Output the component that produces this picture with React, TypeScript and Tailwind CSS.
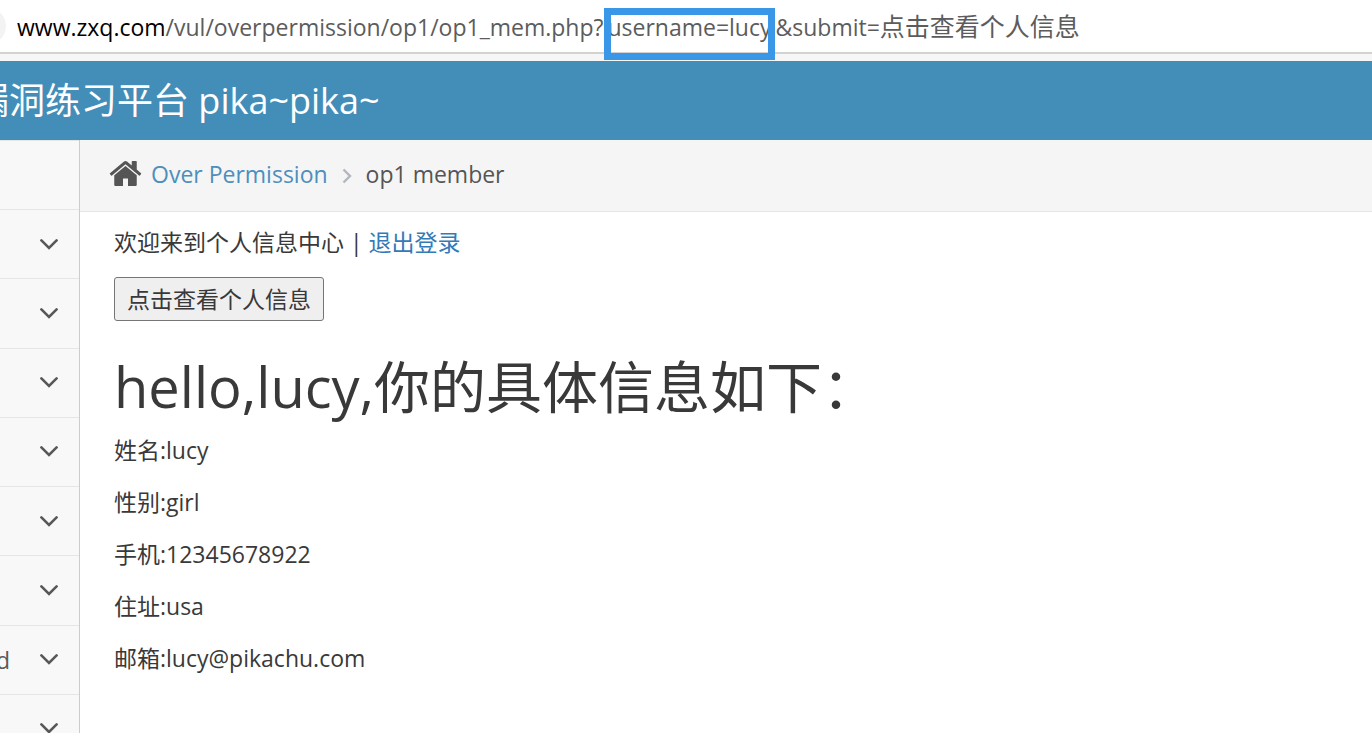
import type { ReactNode } from "react"

interface MenuItem {
    id: number
    label?: string
}

interface ProfileField {
    name: string
    value: string
}

const menuItems: MenuItem[] = [
    { id: 1 },
    { id: 2 },
    { id: 3 },
    { id: 4 },
    { id: 5 },
    { id: 6 },
    { id: 7, label: "d" },
    { id: 8 },
]

const profile: ProfileField[] = [
    { name: "姓名", value: "lucy" },
    { name: "性别", value: "girl" },
    { name: "手机", value: "12345678922" },
    { name: "住址", value: "usa" },
    { name: "邮箱", value: "lucy@pikachu.com" },
]

/* ---------------- Icons ---------------- */
function HomeIcon() {
    return (
        <svg viewBox="0 0 1792 1792" className="size-[35px] shrink-0 fill-[#555]" aria-hidden="true">
            <path d="M1472 992v480q0 26-19 45t-45 19h-384v-384h-256v384h-384q-26 0-45-19t-19-45v-480q0-1 .5-3t.5-3l575-474 575 474q1 2 1 6zm223-69l-62 74q-8 9-21 11h-3q-13 0-21-7l-692-577-692 577q-12 8-24 7-13-2-21-11l-62-74q-8-10-7-23.5t11-21.5l719-599q32-26 76-26t76 26l244 204v-195q0-14 9-23t23-9h192q14 0 23 9t9 23v408l219 182q10 8 11 21.5t-7 23.5z" />
        </svg>
    )
}

function AngleDown() {
    return (
        <svg viewBox="0 0 18 11" className="h-[11px] w-[18px] shrink-0" fill="none" stroke="#585858" strokeWidth="2.6" aria-hidden="true">
            <path d="M1.400 1.400 9 9l7.600-7.600" strokeLinecap="round" />
        </svg>
    )
}

function AngleRight() {
    return (
        <svg viewBox="0 0 10 16" className="mt-1 h-4 w-[10px]" fill="none" stroke="#b2b6bf" strokeWidth="2.400" aria-hidden="true">
            <path d="M1.500 1.500 8 8l-6.500 6.500" />
        </svg>
    )
}

/* ---------------- Address bar ---------------- */
function Highlight({ children }: { children: ReactNode }) {
    return (
        <span className="relative mx-1">
            {children}
            <span className="absolute -inset-x-[3px] -top-[3px] h-[52px] border-[7px] border-[#3a96e6]" />
        </span>
    )
}

function AddressBar() {
    return (
        <div className="relative z-10 border-b-[7px] border-[#f6f6f6]">
            <div className="flex h-[54px] items-center border-b-2 border-[#d2d2d2] bg-white">
                <span className="-ml-[30px] size-9 shrink-0 rounded-full bg-[#f3f3f3]" />
                <p className="ml-[11px] whitespace-nowrap text-[#5c5c5c]">
                    <span className="text-black">www.zxq.com</span>
                    /vul/overpermission/op1/op1_mem.php?
                    <Highlight>username=lucy</Highlight>
                    &amp;submit=
                    <span className="text-[25px]">点击查看个人信息</span>
                </p>
            </div>
        </div>
    )
}

export default function App() {
    return (
        <div className="flex h-screen flex-col overflow-hidden bg-white font-['Open_Sans','Noto_Sans_CJK_SC',sans-serif] text-[23px] leading-[34px] text-[#393939]">
            <AddressBar />

            <header className="flex h-[79px] shrink-0 items-center bg-[#438eb9]">
                <div className="-ml-[27px] whitespace-nowrap text-[36px] leading-[48px] text-white">
                    漏洞练习平台 pika~pika~
                </div>
            </header>

            <div className="flex min-h-0 flex-1">
                {/* Sidebar */}
                <nav className="w-20 shrink-0 overflow-hidden border-r border-[#ccc] bg-[#f8f8f8]">
                    <ul className="grid h-[623px] grid-cols-1 grid-rows-9">
                        <li className="border-t border-[#e5e5e5]" />
                        {menuItems.map(item => (
                            <li key={item.id} className="border-t border-[#e5e5e5]">
                                <a href="#" className="flex h-full items-center justify-end gap-[30px] pr-[21px] text-[#585858]">
                                    {item.label}
                                    <AngleDown />
                                </a>
                            </li>
                        ))}
                    </ul>
                </nav>

                <main className="min-w-0 flex-1">
                    {/* Breadcrumb */}
                    <ol className="flex h-[72px] items-center border-b border-[#e5e5e5] bg-[#f5f5f5] pb-1 pl-7">
                        <li className="flex items-center gap-2">
                            <HomeIcon />
                            <a href="#" className="text-[#4c8fbd]">Over Permission</a>
                        </li>
                        <li className="flex items-center gap-[14px] pl-[14px] text-[#555]">
                            <AngleRight />
                            op1 member
                        </li>
                    </ol>

                    {/* Profile */}
                    <div className="px-[34px] pt-[13px]">
                        <p>
                            欢迎来到个人信息中心 | <a href="#" className="text-[#337ab7]">退出登录</a>
                        </p>
                        <form onSubmit={e => e.preventDefault()} className="mt-[18px]">
                            <button
                                type="submit"
                                className="block h-11 rounded-[3px] border border-[#767676] bg-[#efefef] px-3"
                            >
                                点击查看个人信息
                            </button>
                        </form>
                        <h1 className="mt-[31px] mb-[13px] text-[56px] leading-[68px]">hello,lucy,你的具体信息如下：</h1>
                        {profile.map(field => (
                            <p key={field.name} className="mb-[18px]">
                                {field.name}:{field.value}
                            </p>
                        ))}
                    </div>
                </main>
            </div>
        </div>
    )
}
